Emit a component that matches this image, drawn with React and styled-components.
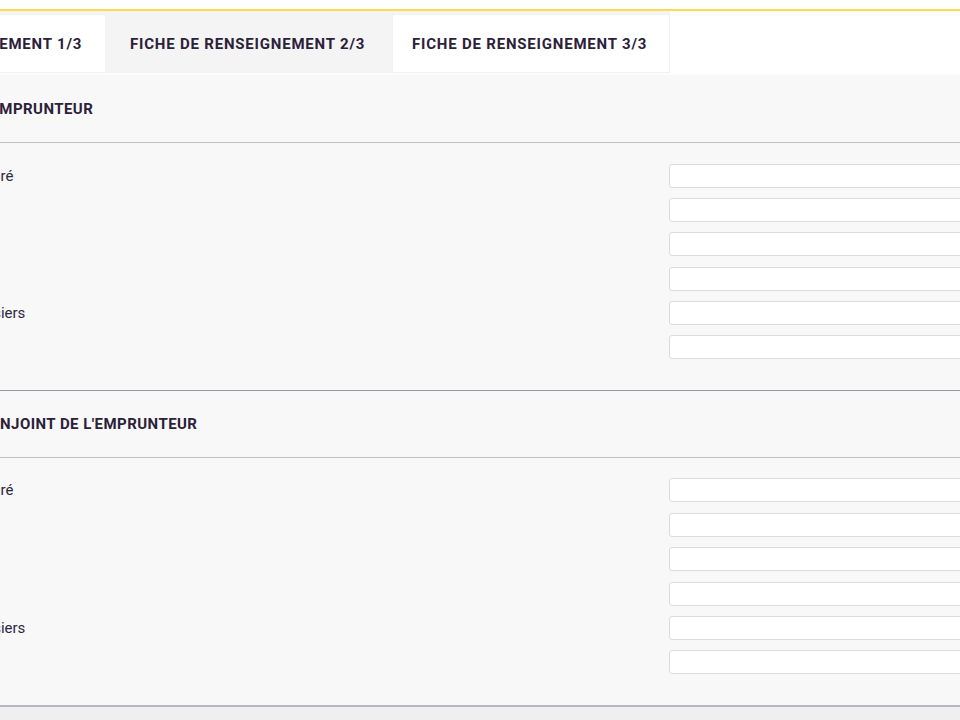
import React from "react";
import styled, { createGlobalStyle } from "styled-components";

const GlobalStyle = createGlobalStyle`
  html, body {
    margin: 0;
    padding: 0;
    background: #f0f0f0;
  }
  body {
    font-family: Roboto, "Liberation Sans", sans-serif;
    color: #2b2139;
  }
`;

const Page = styled.div`
  width: 960px;
  height: 720px;
  overflow: hidden;
  background: #f0f0f0;
`;

const TopStrip = styled.div`
  height: 9px;
  background: #ffffff;
  border-bottom: 2px solid #fcdd45;
`;

const TabBar = styled.div`
  display: flex;
  height: 62px;
  background: #ffffff;
  border-bottom: 2px solid #fcfcfc;
`;

const TabList = styled.div`
  display: flex;
  align-items: flex-start;
  margin-left: -176px;
  background: #f4f4f4;
`;

const Tab = styled.div`
  box-sizing: border-box;
  width: ${(p) => p.$width}px;
  height: 59px;
  display: flex;
  align-items: center;
  margin-top: 3px;
  padding-left: ${(p) => p.$pad}px;
  background: ${(p) => (p.$active ? "#f4f4f4" : "#ffffff")};
  border: 1px solid ${(p) => (p.$active ? "transparent" : "#f2f2f2")};
  font-size: 15px;
  font-weight: 700;
  letter-spacing: 0.8px;
  color: #2b2139;
  white-space: nowrap;
`;

const TabFiller = styled.div`
  flex: 1;
  background: #ffffff;
`;

const Main = styled.div`
  margin-left: -37px;
  background: #f8f8f8;
`;

const Section = styled.section`
  border-top: 1px solid ${(p) => p.$lineColor};
`;

const SectionHead = styled.div`
  height: 66px;
  display: flex;
  align-items: center;
  padding-left: 16px;
  border-bottom: 1px solid #c2c1c7;
  font-size: 15px;
  font-weight: 700;
  letter-spacing: 0.45px;
  color: #2b2139;
  white-space: nowrap;
`;

const Fields = styled.div`
  display: grid;
  grid-template-columns: 702px 330px;
  row-gap: 10.4px;
  padding: 20.5px 0 30.5px 4px;
`;

const Label = styled.label`
  display: flex;
  align-items: center;
  font-size: 15px;
  color: #2e2840;
  white-space: nowrap;
`;

const Input = styled.input`
  box-sizing: border-box;
  height: 24px;
  width: 100%;
  margin: 0;
  background: #ffffff;
  border: 1px solid #dcdcdc;
  border-radius: 3px;
  font-family: inherit;
  font-size: 13px;
  padding: 0 8px;
`;

const Footer = styled.div`
  border-top: 2px solid #b9b8be;
  height: 40px;
  background: #efefef;
`;

const fields = ["Assuré", "Nom", "Âge", "Tél.", "Dossiers", "Ville"];

function FieldList() {
  return (
    <Fields>
      {fields.map((label) => (
        <React.Fragment key={label}>
          <Label>{label}</Label>
          <Input type="text" />
        </React.Fragment>
      ))}
    </Fields>
  );
}

export default function App() {
  return (
    <Page>
      <GlobalStyle />
      <TopStrip />
      <TabBar>
        <TabList>
          <Tab $width={282} $pad={22}>
            FICHE DE RENSEIGNEMENT 1/3
          </Tab>
          <Tab $width={286} $pad={23} $active>
            FICHE DE RENSEIGNEMENT 2/3
          </Tab>
          <Tab $width={278} $pad={19}>
            FICHE DE RENSEIGNEMENT 3/3
          </Tab>
        </TabList>
        <TabFiller />
      </TabBar>
      <Main>
        <Section $lineColor="transparent">
          <SectionHead>L'EMPRUNTEUR</SectionHead>
          <FieldList />
        </Section>
        <Section $lineColor="#9a97a3">
          <SectionHead>CONJOINT DE L'EMPRUNTEUR</SectionHead>
          <FieldList />
        </Section>
      </Main>
      <Footer />
    </Page>
  );
}
